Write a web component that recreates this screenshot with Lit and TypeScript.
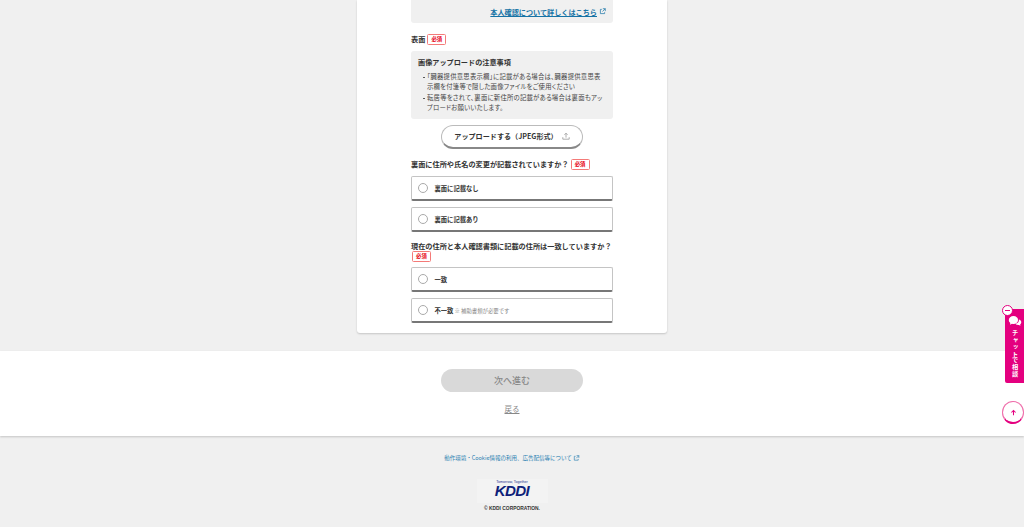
import { LitElement, html, css, svg } from "lit";
import { customElement } from "lit/decorators.js";

const ext = svg`<path d="M4 2H2v6h6V6M5.5 1H9v3.5M9 1 5 5" fill="none" stroke="currentColor" stroke-width="1"/>`;

@customElement("app-root")
export class AppRoot extends LitElement {
  static styles = css`
    :host { display: block; position: relative; width: 1024px; height: 527px; overflow: hidden; background: #f0f0f0;
      font-family: "Noto Sans CJK JP", "Noto Sans", sans-serif; color: #333; }
    .card { width: 310px; height: 333px; margin: 0 auto 18px; box-sizing: border-box; padding: 0 54px; background: #fff;
      border-radius: 0 0 3px 3px; box-shadow: 0 1px 2px rgba(0,0,0,.18); }
    .linkbox { height: 23px; box-sizing: border-box; padding: 0 7px 0 0; background: #f0f0f0; border-radius: 0 0 3px 3px;
      display: flex; justify-content: flex-end; align-items: center; gap: 2px; font-size: 7.13px; font-weight: 700; color: #1673a6; }
    .linkbox span { text-decoration: underline; }
    .linkbox svg { width: 7px; height: 7px; }
    .h { font-size: 7.18px; font-weight: 700; line-height: 9.5px; color: #333; }
    .h1 { margin-top: 11px; display: flex; align-items: center; height: 11px; }
    .tag { display: block; flex: none; box-sizing: border-box; width: 19px; height: 11px; margin-left: 2px; border: 1px solid #f47a78; border-radius: 1.5px;
      background: #fff; color: #e60012; font-size: 5.4px; font-weight: 700; line-height: 9px; text-align: center; }
    .note { margin-top: 6px; height: 68px; box-sizing: border-box; padding: 6px 7px; background: #f0f0f0; border-radius: 3px; }
    .note h4 { margin: 0 0 5px; font-size: 7.15px; line-height: 10px; font-weight: 700; color: #333; }
    .note ul { margin: 0; padding: 0; list-style: none; }
    .note li { position: relative; padding-left: 9px; font-size: 6.35px; line-height: 10px; color: #444; font-feature-settings: "palt"; letter-spacing: .24px; }
    .note li + li { margin-top: 1px; }
    .note li::before { content: ""; position: absolute; left: 5px; top: 4.5px; width: 1.5px; height: 1.5px; border-radius: 50%; background: #444; }
    .upload { display: flex; align-items: center; justify-content: center; gap: 4px; width: 142px; height: 24px; box-sizing: border-box; margin: 6px auto 0; padding-bottom: 1px;
      border: 1px solid #bbb; border-bottom: 2px solid #888; border-radius: 12px; background: #fff; font-size: 7.1px; font-weight: 700; color: #333; }
    .upload svg { width: 8px; height: 8px; color: #999; }
    .q { margin-top: 10px; }
    .q.one { display: flex; align-items: center; height: 11px; }
    .q.one + .opts { margin-top: 5.5px; }
    .q.two .tag { margin-left: 1px; }
    .q.two + .opts { margin-top: 5px; }
    .opts { display: flex; flex-direction: column; gap: 6px; }
    .opt { height: 25px; box-sizing: border-box; display: flex; align-items: center; padding-left: 6px; background: #fff;
      border: 1px solid #c4c4c4; border-bottom: 2px solid #777; border-radius: 2px; font-size: 6.3px; font-weight: 700; color: #333; }
    .lb { padding-top: 1px; }
    .radio { width: 10px; height: 10px; box-sizing: border-box; border: 1px solid #aaa; border-radius: 50%; margin-right: 6.5px; flex: none; }
    .sub { margin-left: 1px; font-size: 5.4px; font-weight: 400; color: #888; }
    .white { height: 85px; background: #fff; box-shadow: 0 1px 2px rgba(0,0,0,.18); display: flex; flex-direction: column; align-items: center; }
    .next { margin-top: 18px; width: 142px; height: 23px; border-radius: 12px; background: #d9d9d9; color: #888; font-size: 9px; font-weight: 500;
      display: flex; align-items: center; justify-content: center; }
    .back { margin-top: 11px; font-size: 7.5px; line-height: 12px; color: #888; text-decoration: underline; }
    footer { display: flex; flex-direction: column; align-items: center; }
    .flink { margin-top: 17px; display: flex; align-items: center; gap: 1.5px; font-size: 5.5px; line-height: 10px; color: #2a7fb0; }
    .flink svg { width: 6.5px; height: 6.5px; }
    .logo { margin-top: 16px; width: 71px; height: 24px; background: #f3f3f3; display: flex; flex-direction: column; align-items: center; }
    .tom { font: 3.6px/5px "Liberation Sans", sans-serif; color: #23308f; padding-top: 1px; }
    .kddi { font: italic 900 14px/13px "Liberation Sans", sans-serif; letter-spacing: -.6px; color: #0f1f7a; transform: scaleX(1.08); }
    .copy { margin-top: 2px; font: 700 4.9px/8px "Liberation Sans", sans-serif; color: #333; }
    .chat { position: absolute; left: 1005px; top: 309px; width: 19px; height: 74px; background: #e4007f; border-radius: 2px 0 0 2px; color: #fff;
      display: flex; flex-direction: column; align-items: center; }
    .chat svg { width: 14px; height: 12px; margin-top: 6px; }
    .chat .vt { writing-mode: vertical-rl; font-size: 6.2px; font-weight: 700; line-height: 10px; margin-top: 3px; letter-spacing: .5px; }
    .min { position: absolute; left: 1002px; top: 305px; width: 11px; height: 11px; box-sizing: border-box; border: 1px solid #e4007f; border-radius: 50%; background: #fff; display: flex; align-items: center; justify-content: center; }
    .min i { display: block; width: 5px; height: 1px; background: #e4007f; }
    .top { position: absolute; left: 1002px; top: 401px; width: 22px; height: 23px; box-sizing: border-box; border: 1px solid #ee6aa8; border-bottom: 2px solid #e4007f; border-radius: 50%; background: #fff; display: flex; align-items: center; justify-content: center; }
    .top svg { width: 7px; height: 7px; }
  `;

  tag() { return html`<span class="tag">必須</span>`; }

  render() {
    return html`
      <main class="card">
        <div class="linkbox"><span>本人確認について詳しくはこちら</span><svg viewBox="0 0 10 10">${ext}</svg></div>
        <div class="h h1">表面${this.tag()}</div>
        <section class="note">
          <h4>画像アップロードの注意事項</h4>
          <ul>
            <li>「臓器提供意思表示欄」に記載がある場合は、臓器提供意思表示欄を付箋等で隠した画像ファイルをご使用ください</li>
            <li>転居等をされて、裏面に新住所の記載がある場合は裏面もアップロードお願いいたします。</li>
          </ul>
        </section>
        <div class="upload">アップロードする（JPEG形式）<svg viewBox="0 0 10 10"><path d="M5 7V1.5M3 3.5l2-2 2 2M1 6.5V9h8V6.5" fill="none" stroke="currentColor" stroke-width="1"/></svg></div>
        <div class="h q one">裏面に住所や氏名の変更が記載されていますか？${this.tag()}</div>
        <div class="opts">
          <div class="opt"><span class="radio"></span><span class="lb">裏面に記載なし</span></div>
          <div class="opt"><span class="radio"></span><span class="lb">裏面に記載あり</span></div>
        </div>
        <div class="h q two">現在の住所と本人確認書類に記載の住所は一致していますか？${this.tag()}</div>
        <div class="opts">
          <div class="opt"><span class="radio"></span><span class="lb">一致</span></div>
          <div class="opt"><span class="radio"></span><span class="lb">不一致</span><span class="sub lb">※ 補助書類が必要です</span></div>
        </div>
      </main>
      <section class="white">
        <div class="next">次へ進む</div>
        <div class="back">戻る</div>
      </section>
      <footer>
        <div class="flink">動作環境・Cookie情報の利用、広告配信等について<svg viewBox="0 0 10 10">${ext}</svg></div>
        <div class="logo"><div class="tom">Tomorrow, Together</div><div class="kddi">KDDI</div></div>
        <div class="copy">© KDDI CORPORATION.</div>
      </footer>
      <div class="chat">
        <svg viewBox="0 0 14 12"><path d="M5.5 1C2.8 1 .8 2.8.8 5c0 1.2.6 2.2 1.5 3L2 9.8 4 8.8c.5.1 1 .2 1.5.2C8.2 9 10 7.2 10 5S8.2 1 5.5 1z" fill="#fff"/><path d="M10.8 4.5c1.5.3 2.5 1.4 2.5 2.7 0 .9-.4 1.6-1.100 2.100l.2 1.400-1.500-.8c-1.300.2-2.700-.2-3.400-1.200 2 0 3.900-1.900 3.300-4.200z" fill="#fff"/></svg>
        <div class="vt">チャットで相談</div>
      </div>
      <div class="min"><i></i></div>
      <div class="top"><svg viewBox="0 0 10 10"><path d="M5 9V2M2 5l3-3 3 3" fill="none" stroke="#e4007f" stroke-width="1.5"/></svg></div>
    `;
  }
}
